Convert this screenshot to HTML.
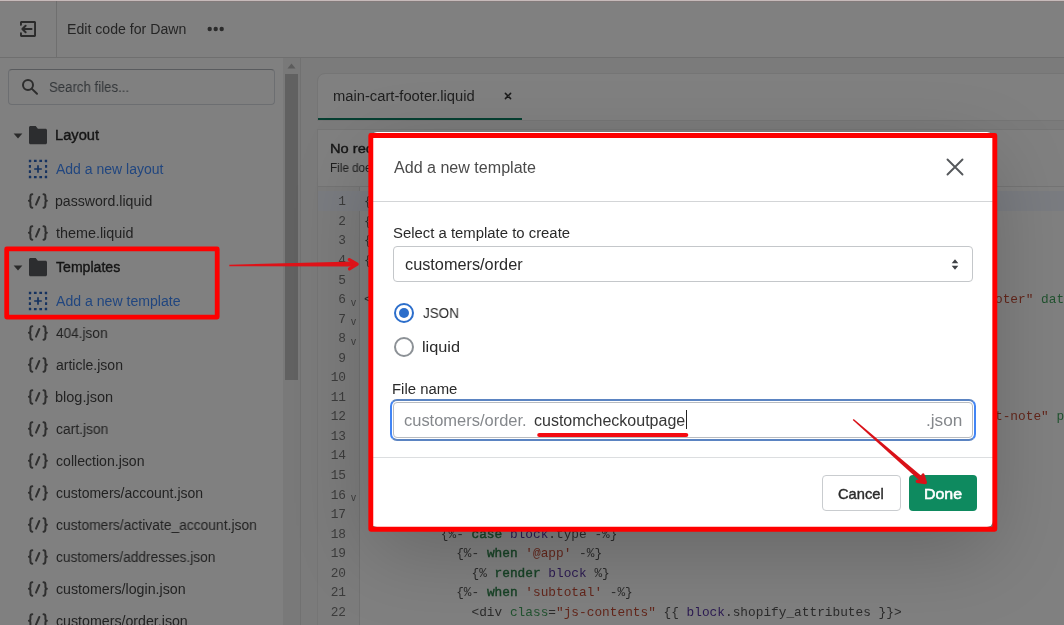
<!DOCTYPE html>
<html>
<head>
<meta charset="utf-8">
<title>Edit code for Dawn</title>
<style>
*{box-sizing:border-box;margin:0;padding:0}
html,body{width:1064px;height:625px;overflow:hidden;background:#7b7b7b;font-family:"Liberation Sans",sans-serif;}
body{position:relative;color:#111}
.abs{position:absolute}
.t{position:absolute;white-space:nowrap;line-height:1;transform-origin:0 0;will-change:transform}
/* top strip + header */
#topline{left:0;top:0;width:1064px;height:2px;background:linear-gradient(#c6baba 0,#c6baba 50%,#847b7b 50%,#847b7b 100%)}
#header{left:0;top:1px;width:1064px;height:57px;background:#808080;border-bottom:1px solid #6f6f6f}
#hsep{left:56px;top:1px;width:1px;height:56px;background:#6f6f6f}
/* sidebar */
#sidebar{left:0;top:58px;width:301px;height:567px;background:#808080;border-right:1px solid #717171}
#search{left:8px;top:69px;width:267px;height:36px;border:1px solid #6c6e71;border-top-color:#595b5e;border-radius:4px;background:#808080}
#sbtrack{left:283px;top:58px;width:17px;height:567px;background:#797979}
#sbthumb{left:285px;top:74px;width:13px;height:306px;background:#616161}
/* editor */
#tabcard{left:317px;top:73px;width:760px;height:48px;background:#808080;border:1px solid #757575;border-radius:8px 0 0 0}
#tabul{left:318px;top:117.500px;width:204px;height:2.500px;background:#063f31}
#card2{left:317px;top:129px;width:760px;height:500px;background:#808080;border:1px solid #757575}
#edtop{left:318px;top:186px;width:746px;height:1px;background:#747474}
#gutter{left:318px;top:187px;width:42px;height:438px;background:#7c7c7c;border-right:1px solid #727272}
#hl{left:318px;top:191px;width:746px;height:19.600px;background:#7a7c81}
.ln{position:absolute;left:318px;width:28px;text-align:right;font-family:"Liberation Mono",monospace;font-size:12.8px;line-height:19.5px;color:#3c3c3c;height:19.5px;will-change:transform}
.fold{position:absolute;left:350.500px;font-family:"Liberation Sans",sans-serif;font-size:10px;line-height:19.5px;color:#3d3d3d;will-change:transform}
.code{position:absolute;left:364.400px;font-family:"Liberation Mono",monospace;font-size:12.8px;line-height:19.5px;height:19.5px;white-space:pre;color:#2b2b2b;will-change:transform}
.kw{color:#174226;-webkit-text-stroke:.4px #174226}.st{color:#63261b}.at{color:#21522f}.vr{color:#2b1a52}
/* modal */
#modal{left:370.500px;top:131.800px;width:622.800px;height:395.600px;background:#fff;border-radius:6px;box-shadow:0 26px 80px rgba(0,0,0,.2),0 0 1px rgba(0,0,0,.2)}
#mhdiv{left:373px;top:201px;width:620px;height:1px;background:#d3d5d7}
#mfdiv{left:373px;top:457px;width:620px;height:1px;background:#dcdee0}
#select{left:393px;top:246px;width:580px;height:36px;border:1px solid #c4c7ca;border-radius:4px;background:#fff}
#finput{left:390px;top:399px;width:586px;height:42px;border:2px solid #4285f4;border-top-color:#5b84c2;border-bottom-color:#5b84c2;border-radius:7px;background:#fff}
#finner{left:393px;top:402px;width:580px;height:36px;border:1px solid #b9bcc0;border-radius:4px}
#cancel{left:822px;top:475px;width:79px;height:36px;border:1px solid #c9cccf;border-radius:4px;background:#fff}
#done{left:909px;top:475px;width:68px;height:36px;border-radius:4px;background:#0e8a5f}
.radio{position:absolute;width:20px;height:20px;border-radius:50%;background:#fff}
#overlay{left:0;top:0;width:1064px;height:625px;pointer-events:none}
</style>
</head>
<body>
<div class="abs" id="header"></div>
<div class="abs" id="topline"></div>
<div class="abs" id="hsep"></div>
<!-- header content -->
<svg class="abs" style="left:20px;top:21px" width="16" height="16" viewBox="0 0 17 17" fill="none" stroke="#2b2b2b" stroke-width="2.100" stroke-linecap="round" stroke-linejoin="round">
<path d="M1 4V1.800c0-.5.3-.8.8-.8h13.400c.5 0 .8.300.8.800v13.400c0 .5-.3.800-.800.800H1.800c-.5 0-.8-.3-.8-.8V13"/>
<path d="M12.300 8.500H2.500M6 5 2.500 8.500 6 12"/>
</svg>
<div class="t" style="left:66.94px;top:22.00px;font-size:14px;color:#252525;transform:scaleX(1.0090)">Edit code for Dawn</div>
<svg class="abs" style="left:207px;top:26px" width="18" height="6" viewBox="0 0 18 6"><circle cx="2.700" cy="3" r="2.200" fill="#2b2b2b"/><circle cx="8.700" cy="3" r="2.200" fill="#2b2b2b"/><circle cx="14.700" cy="3" r="2.200" fill="#2b2b2b"/></svg>

<!-- sidebar -->
<div class="abs" id="sidebar"></div>
<div class="abs" id="sbtrack"></div>
<div class="abs" id="sbthumb"></div>
<svg class="abs" style="left:287px;top:63px" width="9" height="6" viewBox="0 0 9 6"><path d="M4.500 .5 8.500 5.500H.5z" fill="#5c5c5c"/></svg>
<div class="abs" id="search"></div>
<svg class="abs" style="left:21px;top:77px" width="19" height="19" viewBox="0 0 19 19" fill="none" stroke="#2d2d2d" stroke-width="2" stroke-linecap="round"><circle cx="7" cy="7.900" r="5"/><path d="M10.700 11.600 16 16.700"/></svg>
<div class="t" style="left:48.59px;top:80.00px;font-size:14px;color:#333639;transform:scaleX(0.9438)">Search files...</div>
<svg class="abs" style="left:13px;top:133px" width="10" height="6" viewBox="0 0 10 6"><path d="M.6 .4H9.400L5 5.600z" fill="#2a2a2a"/></svg><svg class="abs" style="left:29px;top:126px" width="18" height="19" viewBox="0 0 18 19"><path d="M1.500 .1h5.200l2.200 2.600h7.600c.8 0 1.500.7 1.500 1.500v12.500c0 .8-.7 1.500-1.500 1.500h-15c-.8 0-1.500-.7-1.500-1.500V1.600C0 .8.7.1 1.500.1z" fill="#2c2d2f"/></svg><div class="t" style="left:54.89px;top:128.00px;font-size:14px;color:#151515;-webkit-text-stroke:0.38px #151515;transform:scaleX(1.0479)">Layout</div>
<svg class="abs" style="left:28px;top:159px" width="20" height="20" viewBox="0 0 20 20" fill="none" stroke="#15325f" stroke-width="2.100"><rect x="1.900" y="1.900" width="16.200" height="16.200" stroke-dasharray="2.700 2.700" stroke-dashoffset="1.350"/><path d="M10 6.200V13.800M6.200 10H13.800" stroke-width="1.700"/></svg><div class="t" style="left:56.20px;top:162.00px;font-size:14px;color:#21467f;transform:scaleX(0.9995)">Add a new layout</div>
<svg class="abs" style="left:27px;top:193px" width="22" height="16" viewBox="0 0 22 16" fill="none" stroke="#2f2f2f" stroke-width="2" stroke-linecap="round" stroke-linejoin="round"><path d="M5.300 1.200C3.600 1.200 3.400 2.200 3.400 3.600V5.600C3.400 7 2.800 7.850 1.900 7.850 2.800 7.850 3.400 8.700 3.400 10.100V12.100C3.400 13.700 3.600 14.700 5.300 14.700"/><path d="M16.500 1.200C18.200 1.200 18.400 2.200 18.400 3.600V5.600C18.400 7 19 7.850 19.900 7.850 19 7.850 18.400 8.700 18.400 10.100V12.100C18.400 13.700 18.200 14.700 16.500 14.700"/><path d="M12.300 4 9 11.600"/></svg><div class="t" style="left:55.19px;top:194.00px;font-size:14px;color:#222222;transform:scaleX(1.0085)">password.liquid</div>
<svg class="abs" style="left:27px;top:225px" width="22" height="16" viewBox="0 0 22 16" fill="none" stroke="#2f2f2f" stroke-width="2" stroke-linecap="round" stroke-linejoin="round"><path d="M5.300 1.200C3.600 1.200 3.400 2.200 3.400 3.600V5.600C3.400 7 2.800 7.850 1.900 7.850 2.800 7.850 3.400 8.700 3.400 10.100V12.100C3.400 13.700 3.600 14.700 5.300 14.700"/><path d="M16.500 1.200C18.200 1.200 18.400 2.200 18.400 3.600V5.600C18.400 7 19 7.850 19.900 7.850 19 7.850 18.400 8.700 18.400 10.100V12.100C18.400 13.700 18.200 14.700 16.500 14.700"/><path d="M12.300 4 9 11.600"/></svg><div class="t" style="left:55.94px;top:226.00px;font-size:14px;color:#222222;transform:scaleX(1.0263)">theme.liquid</div>
<svg class="abs" style="left:13px;top:265px" width="10" height="6" viewBox="0 0 10 6"><path d="M.6 .4H9.400L5 5.600z" fill="#2a2a2a"/></svg><svg class="abs" style="left:29px;top:258px" width="18" height="19" viewBox="0 0 18 19"><path d="M1.500 .1h5.200l2.200 2.600h7.600c.8 0 1.500.7 1.500 1.500v12.500c0 .8-.7 1.500-1.500 1.500h-15c-.8 0-1.500-.7-1.500-1.500V1.600C0 .8.7.1 1.500.1z" fill="#2c2d2f"/></svg><div class="t" style="left:55.95px;top:260.00px;font-size:14px;color:#151515;-webkit-text-stroke:0.38px #151515;transform:scaleX(1.0063)">Templates</div>
<svg class="abs" style="left:28px;top:291px" width="20" height="20" viewBox="0 0 20 20" fill="none" stroke="#15325f" stroke-width="2.100"><rect x="1.900" y="1.900" width="16.200" height="16.200" stroke-dasharray="2.700 2.700" stroke-dashoffset="1.350"/><path d="M10 6.200V13.800M6.200 10H13.800" stroke-width="1.700"/></svg><div class="t" style="left:56.20px;top:294.00px;font-size:14px;color:#21467f;transform:scaleX(1.0065)">Add a new template</div>
<svg class="abs" style="left:27px;top:325px" width="22" height="16" viewBox="0 0 22 16" fill="none" stroke="#2f2f2f" stroke-width="2" stroke-linecap="round" stroke-linejoin="round"><path d="M5.300 1.200C3.600 1.200 3.400 2.200 3.400 3.600V5.600C3.400 7 2.800 7.850 1.900 7.850 2.800 7.850 3.400 8.700 3.400 10.100V12.100C3.400 13.700 3.600 14.700 5.300 14.700"/><path d="M16.500 1.200C18.200 1.200 18.400 2.200 18.400 3.600V5.600C18.400 7 19 7.850 19.900 7.850 19 7.850 18.400 8.700 18.400 10.100V12.100C18.400 13.700 18.200 14.700 16.500 14.700"/><path d="M12.300 4 9 11.600"/></svg><div class="t" style="left:55.96px;top:326.00px;font-size:14px;color:#222222;transform:scaleX(0.9739)">404.json</div>
<svg class="abs" style="left:27px;top:357px" width="22" height="16" viewBox="0 0 22 16" fill="none" stroke="#2f2f2f" stroke-width="2" stroke-linecap="round" stroke-linejoin="round"><path d="M5.300 1.200C3.600 1.200 3.400 2.200 3.400 3.600V5.600C3.400 7 2.800 7.850 1.900 7.850 2.800 7.850 3.400 8.700 3.400 10.100V12.100C3.400 13.700 3.600 14.700 5.300 14.700"/><path d="M16.500 1.200C18.200 1.200 18.400 2.200 18.400 3.600V5.600C18.400 7 19 7.850 19.900 7.850 19 7.850 18.400 8.700 18.400 10.100V12.100C18.400 13.700 18.200 14.700 16.500 14.700"/><path d="M12.300 4 9 11.600"/></svg><div class="t" style="left:55.70px;top:358.00px;font-size:14px;color:#222222;transform:scaleX(0.9954)">article.json</div>
<svg class="abs" style="left:27px;top:389px" width="22" height="16" viewBox="0 0 22 16" fill="none" stroke="#2f2f2f" stroke-width="2" stroke-linecap="round" stroke-linejoin="round"><path d="M5.300 1.200C3.600 1.200 3.400 2.200 3.400 3.600V5.600C3.400 7 2.800 7.850 1.900 7.850 2.800 7.850 3.400 8.700 3.400 10.100V12.100C3.400 13.700 3.600 14.700 5.300 14.700"/><path d="M16.500 1.200C18.200 1.200 18.400 2.200 18.400 3.600V5.600C18.400 7 19 7.850 19.900 7.850 19 7.850 18.400 8.700 18.400 10.100V12.100C18.400 13.700 18.200 14.700 16.500 14.700"/><path d="M12.300 4 9 11.600"/></svg><div class="t" style="left:55.16px;top:390.00px;font-size:14px;color:#222222;transform:scaleX(1.0359)">blog.json</div>
<svg class="abs" style="left:27px;top:421px" width="22" height="16" viewBox="0 0 22 16" fill="none" stroke="#2f2f2f" stroke-width="2" stroke-linecap="round" stroke-linejoin="round"><path d="M5.300 1.200C3.600 1.200 3.400 2.200 3.400 3.600V5.600C3.400 7 2.800 7.850 1.900 7.850 2.800 7.850 3.400 8.700 3.400 10.100V12.100C3.400 13.700 3.600 14.700 5.300 14.700"/><path d="M16.500 1.200C18.200 1.200 18.400 2.200 18.400 3.600V5.600C18.400 7 19 7.850 19.900 7.850 19 7.850 18.400 8.700 18.400 10.100V12.100C18.400 13.700 18.200 14.700 16.500 14.700"/><path d="M12.300 4 9 11.600"/></svg><div class="t" style="left:55.70px;top:422.00px;font-size:14px;color:#222222;transform:scaleX(0.9903)">cart.json</div>
<svg class="abs" style="left:27px;top:453px" width="22" height="16" viewBox="0 0 22 16" fill="none" stroke="#2f2f2f" stroke-width="2" stroke-linecap="round" stroke-linejoin="round"><path d="M5.300 1.200C3.600 1.200 3.400 2.200 3.400 3.600V5.600C3.400 7 2.800 7.850 1.900 7.850 2.800 7.850 3.400 8.700 3.400 10.100V12.100C3.400 13.700 3.600 14.700 5.300 14.700"/><path d="M16.500 1.200C18.200 1.200 18.400 2.200 18.400 3.600V5.600C18.400 7 19 7.850 19.900 7.850 19 7.850 18.400 8.700 18.400 10.100V12.100C18.400 13.700 18.200 14.700 16.500 14.700"/><path d="M12.300 4 9 11.600"/></svg><div class="t" style="left:55.70px;top:454.00px;font-size:14px;color:#222222;transform:scaleX(1.0069)">collection.json</div>
<svg class="abs" style="left:27px;top:485px" width="22" height="16" viewBox="0 0 22 16" fill="none" stroke="#2f2f2f" stroke-width="2" stroke-linecap="round" stroke-linejoin="round"><path d="M5.300 1.200C3.600 1.200 3.400 2.200 3.400 3.600V5.600C3.400 7 2.800 7.850 1.900 7.850 2.800 7.850 3.400 8.700 3.400 10.100V12.100C3.400 13.700 3.600 14.700 5.300 14.700"/><path d="M16.500 1.200C18.200 1.200 18.400 2.200 18.400 3.600V5.600C18.400 7 19 7.850 19.900 7.850 19 7.850 18.400 8.700 18.400 10.100V12.100C18.400 13.700 18.200 14.700 16.500 14.700"/><path d="M12.300 4 9 11.600"/></svg><div class="t" style="left:55.70px;top:486.00px;font-size:14px;color:#222222;transform:scaleX(0.9983)">customers/account.json</div>
<svg class="abs" style="left:27px;top:517px" width="22" height="16" viewBox="0 0 22 16" fill="none" stroke="#2f2f2f" stroke-width="2" stroke-linecap="round" stroke-linejoin="round"><path d="M5.300 1.200C3.600 1.200 3.400 2.200 3.400 3.600V5.600C3.400 7 2.800 7.850 1.900 7.850 2.800 7.850 3.400 8.700 3.400 10.100V12.100C3.400 13.700 3.600 14.700 5.300 14.700"/><path d="M16.500 1.200C18.200 1.200 18.400 2.200 18.400 3.600V5.600C18.400 7 19 7.850 19.900 7.850 19 7.850 18.400 8.700 18.400 10.100V12.100C18.400 13.700 18.200 14.700 16.500 14.700"/><path d="M12.300 4 9 11.600"/></svg><div class="t" style="left:55.71px;top:518.00px;font-size:14px;color:#222222;transform:scaleX(0.9888)">customers/activate_account.json</div>
<svg class="abs" style="left:27px;top:549px" width="22" height="16" viewBox="0 0 22 16" fill="none" stroke="#2f2f2f" stroke-width="2" stroke-linecap="round" stroke-linejoin="round"><path d="M5.300 1.200C3.600 1.200 3.400 2.200 3.400 3.600V5.600C3.400 7 2.800 7.850 1.900 7.850 2.800 7.850 3.400 8.700 3.400 10.100V12.100C3.400 13.700 3.600 14.700 5.300 14.700"/><path d="M16.500 1.200C18.200 1.200 18.400 2.200 18.400 3.600V5.600C18.400 7 19 7.850 19.900 7.850 19 7.850 18.400 8.700 18.400 10.100V12.100C18.400 13.700 18.200 14.700 16.500 14.700"/><path d="M12.300 4 9 11.600"/></svg><div class="t" style="left:55.71px;top:550.00px;font-size:14px;color:#222222;transform:scaleX(0.9805)">customers/addresses.json</div>
<svg class="abs" style="left:27px;top:581px" width="22" height="16" viewBox="0 0 22 16" fill="none" stroke="#2f2f2f" stroke-width="2" stroke-linecap="round" stroke-linejoin="round"><path d="M5.300 1.200C3.600 1.200 3.400 2.200 3.400 3.600V5.600C3.400 7 2.800 7.850 1.900 7.850 2.800 7.850 3.400 8.700 3.400 10.100V12.100C3.400 13.700 3.600 14.700 5.300 14.700"/><path d="M16.500 1.200C18.200 1.200 18.400 2.200 18.400 3.600V5.600C18.400 7 19 7.850 19.900 7.850 19 7.850 18.400 8.700 18.400 10.100V12.100C18.400 13.700 18.200 14.700 16.500 14.700"/><path d="M12.300 4 9 11.600"/></svg><div class="t" style="left:55.69px;top:582.00px;font-size:14px;color:#222222;transform:scaleX(1.0154)">customers/login.json</div>
<svg class="abs" style="left:27px;top:613px" width="22" height="16" viewBox="0 0 22 16" fill="none" stroke="#2f2f2f" stroke-width="2" stroke-linecap="round" stroke-linejoin="round"><path d="M5.300 1.200C3.600 1.200 3.400 2.200 3.400 3.600V5.600C3.400 7 2.800 7.850 1.900 7.850 2.800 7.850 3.400 8.700 3.400 10.100V12.100C3.400 13.700 3.600 14.700 5.300 14.700"/><path d="M16.500 1.200C18.200 1.200 18.400 2.200 18.400 3.600V5.600C18.400 7 19 7.850 19.900 7.850 19 7.850 18.400 8.700 18.400 10.100V12.100C18.400 13.700 18.200 14.700 16.500 14.700"/><path d="M12.300 4 9 11.600"/></svg><div class="t" style="left:55.69px;top:614.00px;font-size:14px;color:#222222;transform:scaleX(1.0140)">customers/order.json</div>


<!-- editor -->
<div class="abs" id="tabcard"></div>
<div class="abs" id="tabul"></div>
<div class="t" style="left:332.95px;top:89.00px;font-size:14px;color:#1e1e1e;transform:scaleX(1.0524)">main-cart-footer.liquid</div>
<svg class="abs" style="left:504px;top:92px" width="8" height="8" viewBox="0 0 8 8" stroke="#1a1a1a" stroke-width="1.500" stroke-linecap="round"><path d="M1.400 1.400 6.600 6.600M6.600 1.400 1.400 6.600"/></svg>
<div class="abs" id="card2"></div>
<div class="t" style="left:329.51px;top:142.00px;font-size:13.5px;color:#151515;-webkit-text-stroke:0.4px #151515;transform:scaleX(1.0864)">No recent changes</div>
<div class="t" style="left:329.63px;top:162.00px;font-size:12px;color:#1e1e1e;transform:scaleX(0.9739)">File does not have any recent changes</div>
<div class="abs" id="edtop"></div>
<div class="abs" id="gutter"></div>
<div class="abs" id="hl"></div>
<div class="ln" style="top:192.30px">1</div><div class="code" style="top:192.30px">{</div>
<div class="ln" style="top:211.85px">2</div><div class="code" style="top:211.85px">{</div>
<div class="ln" style="top:231.40px">3</div><div class="code" style="top:231.40px">{</div>
<div class="ln" style="top:250.95px">4</div><div class="code" style="top:250.95px">{</div>
<div class="ln" style="top:270.50px">5</div>
<div class="ln" style="top:290.05px">6</div><div class="fold" style="top:292.55px">v</div><div class="code" style="top:290.05px">&lt;</div>
<div class="ln" style="top:309.60px">7</div><div class="fold" style="top:312.10px">v</div>
<div class="ln" style="top:329.15px">8</div><div class="fold" style="top:331.65px">v</div>
<div class="ln" style="top:348.70px">9</div>
<div class="ln" style="top:368.25px">10</div>
<div class="ln" style="top:387.80px">11</div>
<div class="ln" style="top:407.35px">12</div>
<div class="ln" style="top:426.90px">13</div>
<div class="ln" style="top:446.45px">14</div>
<div class="ln" style="top:466.00px">15</div>
<div class="ln" style="top:485.55px">16</div><div class="fold" style="top:488.05px">v</div>
<div class="ln" style="top:505.10px">17</div>
<div class="ln" style="top:524.65px">18</div><div class="code" style="top:524.65px">          {%- <span class="kw">case</span> <span class="vr">block</span>.type -%}</div>
<div class="ln" style="top:544.20px">19</div><div class="code" style="top:544.20px">            {%- <span class="kw">when</span> <span class="st">'@app'</span> -%}</div>
<div class="ln" style="top:563.75px">20</div><div class="code" style="top:563.75px">              {% <span class="kw">render</span> <span class="vr">block</span> %}</div>
<div class="ln" style="top:583.30px">21</div><div class="code" style="top:583.30px">            {%- <span class="kw">when</span> <span class="st">'subtotal'</span> -%}</div>
<div class="ln" style="top:602.85px">22</div><div class="code" style="top:602.85px">              &lt;div <span class="at">class</span>=<span class="st">"js-contents"</span> {{ <span class="vr">block</span>.shopify_attributes }}&gt;</div>
<div class="code" style="left:994.800px;top:290.05px"><span class="st">oter"</span> <span class="at">data</span></div>
<div class="code" style="left:994.800px;top:407.35px"><span class="st">t-note"</span> <span class="at">pla</span></div>


<!-- modal -->
<div class="abs" id="modal"></div>
<div class="abs" id="mhdiv"></div>
<div class="abs" id="mfdiv"></div>
<div class="t" style="left:393.50px;top:160.00px;font-size:16px;color:#4b4b4b;transform:scaleX(1.0039)">Add a new template</div>
<svg class="abs" style="left:946px;top:158px" width="18" height="18" viewBox="0 0 18 18" stroke="#55585b" stroke-width="1.900" stroke-linecap="round"><path d="M1.500 1.500 16.500 16.500M16.500 1.500 1.500 16.500"/></svg>
<div class="t" style="left:392.70px;top:226.00px;font-size:14px;color:#2a2a2a;transform:scaleX(1.0632)">Select a template to create</div>
<div class="abs" id="select"></div>
<div class="t" style="left:404.54px;top:257.00px;font-size:16px;color:#2a2a2a;transform:scaleX(1.0175)">customers/order</div>
<svg class="abs" style="left:951px;top:259px" width="8" height="11" viewBox="0 0 8 11" fill="#3f4145"><path d="M4 .3 7.300 4.300H.7zM4 10.700.7 6.700H7.300z"/></svg>
<div class="radio" style="left:394px;top:303px;border:2px solid #2c6ecb"></div>
<div class="abs" style="left:399px;top:308px;width:10px;height:10px;border-radius:50%;background:#2c6ecb"></div>
<div class="t" style="left:423.36px;top:306.00px;font-size:14px;color:#2a2a2a;transform:scaleX(0.9611)">JSON</div>
<div class="radio" style="left:394px;top:337px;border:2px solid #8c9196"></div>
<div class="t" style="left:422.44px;top:340.00px;font-size:14px;color:#2a2a2a;transform:scaleX(1.1642)">liquid</div>
<div class="t" style="left:391.67px;top:382.00px;font-size:14px;color:#2a2a2a;transform:scaleX(1.0639)">File name</div>
<div class="abs" id="finput"></div>
<div class="abs" id="finner"></div>
<div class="t" style="left:404.23px;top:413.00px;font-size:16px;color:#85888c;transform:scaleX(1.0291)">customers/order.</div>
<div class="t" style="left:533.95px;top:413.00px;font-size:16px;color:#363636;transform:scaleX(0.9983)">customcheckoutpage</div>
<div class="abs" style="left:686px;top:410px;width:1px;height:19px;background:#222"></div>
<div class="t" style="left:925.59px;top:413.00px;font-size:16px;color:#85888c;transform:scaleX(1.0752)">.json</div>
<div class="abs" id="cancel"></div>
<div class="t" style="left:838.14px;top:487.00px;font-size:14.5px;color:#2b2b2b;-webkit-text-stroke:0.4px #2b2b2b;transform:scaleX(1.0115)">Cancel</div>
<div class="abs" id="done"></div>
<div class="t" style="left:923.53px;top:487.00px;font-size:14.5px;color:#ffffff;-webkit-text-stroke:0.55px #ffffff;transform:scaleX(1.0962)">Done</div>

<!-- annotation overlay -->
<svg class="abs" id="overlay" width="1064" height="625" viewBox="0 0 1064 625">
<rect x="370.800" y="135.450" width="624" height="393.750" fill="none" stroke="#fe0000" stroke-width="4.900" stroke-linejoin="round"/>
<rect x="6.700" y="248.900" width="210.500" height="68.200" fill="none" stroke="#fe0000" stroke-width="4.800" stroke-linejoin="round"/>
<path d="M539.300 435H686.200" stroke="#f40a10" stroke-width="4.200" stroke-linecap="round"/>
<!-- arrow 1 -->
<path d="M229.300 264.700 355 261.600 355 266.600 229.300 266.300z" fill="#de1218"/>
<path d="M349.300 259.600 357.200 264.100 349.500 268.900" fill="none" stroke="#de1218" stroke-width="3.200" stroke-linecap="round" stroke-linejoin="round"/>
<!-- arrow 2 -->
<path d="M853.660 418.970 925.380 479.290 922.220 482.910 852.740 420.030z" fill="#d91118"/>
<path d="M917.200 481.300 925.400 482.600 923 475" fill="none" stroke="#d91118" stroke-width="3.200" stroke-linecap="round" stroke-linejoin="round"/>
</svg>
</body>
</html>
